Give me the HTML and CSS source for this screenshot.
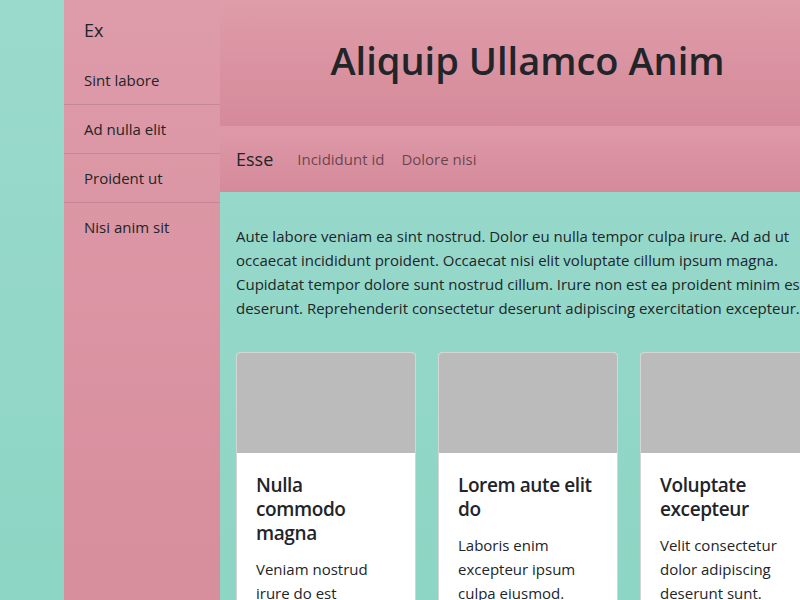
FILE: index.html
```html
<!DOCTYPE html>
<html>
<head>
<meta charset="utf-8">
<link rel="stylesheet" href="styles.css">
</head>
<body>
<div class="layout">
  <aside class="sidebar">
    <div class="brand">Ex</div>
    <ul class="side-nav">
      <li>Sint labore</li>
      <li>Ad nulla elit</li>
      <li>Proident ut</li>
      <li>Nisi anim sit</li>
    </ul>
  </aside>
  <main class="main">
    <header class="hero"><h1>Aliquip Ullamco Anim</h1></header>
    <nav class="topnav">
      <span class="topnav-brand">Esse</span>
      <span class="topnav-link">Incididunt id</span>
      <span class="topnav-link">Dolore nisi</span>
    </nav>
    <section class="content">
      <p class="lead">Aute labore veniam ea sint nostrud. Dolor eu nulla tempor culpa irure. Ad ad ut occaecat incididunt proident. Occaecat nisi elit voluptate cillum ipsum magna. Cupidatat tempor dolore sunt nostrud cillum. Irure non est ea proident minim esse deserunt. Reprehenderit consectetur deserunt adipiscing exercitation excepteur.</p>
      <div class="cards">
        <div class="card">
          <div class="card-img"></div>
          <div class="card-body">
            <h2>Nulla commodo magna</h2>
            <p>Veniam nostrud irure do est consequat.</p>
          </div>
        </div>
        <div class="card">
          <div class="card-img"></div>
          <div class="card-body">
            <h2>Lorem aute elit do</h2>
            <p>Laboris enim excepteur ipsum culpa eiusmod.</p>
          </div>
        </div>
        <div class="card">
          <div class="card-img"></div>
          <div class="card-body">
            <h2>Voluptate excepteur</h2>
            <p>Velit consectetur dolor adipiscing deserunt sunt.</p>
          </div>
        </div>
      </div>
    </section>
  </main>
</div>
</body>
</html>
```

FILE: styles.css
```css
html, body {
  margin: 0;
  padding: 0;
  height: 100%;
  overflow: hidden;
}
body {
  font-family: "Open Sans", "Noto Sans", sans-serif;
  color: #212529;
  background: linear-gradient(#9adacd, #8dd5c4);
}
.layout {
  display: flex;
  padding-left: 64px;
  min-height: 100%;
}
.sidebar {
  width: 156px;
  flex-shrink: 0;
  background: linear-gradient(#de9ba9, #d68c9b);
}
.brand {
  font-size: 18px;
  line-height: 28px;
  padding: 16px 20px 12px;
}
.side-nav {
  list-style: none;
  margin: 0;
  padding: 0;
}
.side-nav li {
  font-size: 15px;
  line-height: 24px;
  padding: 12px 20px;
  border-bottom: 1px solid rgba(0,0,0,0.1);
}
.side-nav li:last-child {
  border-bottom: none;
}
.main {
  width: 615px;
  flex-shrink: 0;
}
.hero {
  height: 126px;
  box-sizing: border-box;
  padding-bottom: 6px;
  display: flex;
  align-items: center;
  justify-content: center;
  background: linear-gradient(#df9ca9, #d58a9a);
}
.hero h1 {
  margin: 0;
  font-size: 38px;
  font-weight: 600;
}
.topnav {
  height: 66px;
  display: flex;
  align-items: center;
  padding: 0 16px;
  background: linear-gradient(#de99a8, #d58a9a);
}
.topnav-brand {
  font-size: 18px;
  margin-right: 24px;
}
.topnav-link {
  font-size: 15px;
  color: rgba(0,0,0,0.55);
  margin-right: 17px;
}
.content {
  padding: 32px 16px;
}
.lead {
  margin: 0 0 32px;
  font-size: 15px;
  line-height: 24px;
}
.cards {
  display: grid;
  grid-template-columns: repeat(3, 180px);
  gap: 22px;
}
.card {
  background: #fff;
  border: 1px solid #d5d5d5;
  border-radius: 4px;
  overflow: hidden;
}
.card-img {
  height: 100px;
  background: #bbbbbb;
}
.card-body {
  padding: 20px 19px;
}
.card-body h2 {
  margin: 0 0 12px;
  font-size: 19px;
  line-height: 24px;
  font-weight: 600;
  letter-spacing: -0.4px;
}
.card-body p {
  margin: 0;
  font-size: 15px;
  line-height: 24px;
}
```
